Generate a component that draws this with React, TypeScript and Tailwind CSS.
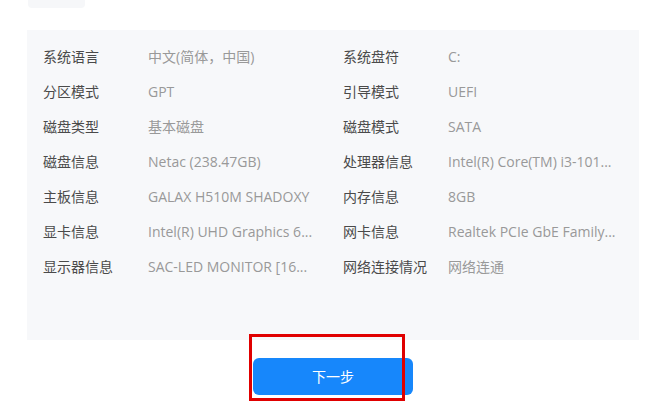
const rows: [string, string, string, string][] = [
  ["系统语言", "中文(简体，中国)", "系统盘符", "C:"],
  ["分区模式", "GPT", "引导模式", "UEFI"],
  ["磁盘类型", "基本磁盘", "磁盘模式", "SATA"],
  ["磁盘信息", "Netac (238.47GB)", "处理器信息", "Intel(R) Core(TM) i3-101..."],
  ["主板信息", "GALAX H510M SHADOXY", "内存信息", "8GB"],
  ["显卡信息", "Intel(R) UHD Graphics 6...", "网卡信息", "Realtek PCIe GbE Family..."],
  ["显示器信息", "SAC-LED MONITOR [16...", "网络连接情况", "网络连通"],
]

function Cell({ label, value }: { label: string; value: string }) {
  return (
    <div className="flex items-center h-[35px]">
      <span className="w-[105px] shrink-0 text-[#4a4a4a]">{label}</span>
      <span className="whitespace-nowrap text-[#999999]">{value}</span>
    </div>
  )
}

export default function App() {
  return (
    <div
      className="relative w-[663px] h-[406px] bg-white overflow-hidden text-[14px]"
      style={{ fontFamily: '"Open Sans", "Noto Sans CJK SC", sans-serif' }}
    >
      <div className="ml-[28px] w-[57px] h-[8px] bg-[#f6f7f9] rounded-b-[4px]" />

      <div className="mt-[22px] ml-[27px] w-[612px] h-[310px] bg-[#f7f8fa] pt-[9px] pl-[16px]">
        {rows.map((r) => (
          <div key={r[0]} className="grid grid-cols-[300px_280px]">
            <Cell label={r[0]} value={r[1]} />
            <Cell label={r[2]} value={r[3]} />
          </div>
        ))}
      </div>

      <div className="flex justify-center mt-[18px] pl-[3px]">
        <button className="w-[160px] h-[37px] rounded-[6px] bg-[#1787fb] text-white text-[14px]">
          下一步
        </button>
      </div>

      <div className="absolute left-[249px] top-[334px] w-[156px] h-[67px] border-[3px] border-[#e00000]" />
    </div>
  )
}
